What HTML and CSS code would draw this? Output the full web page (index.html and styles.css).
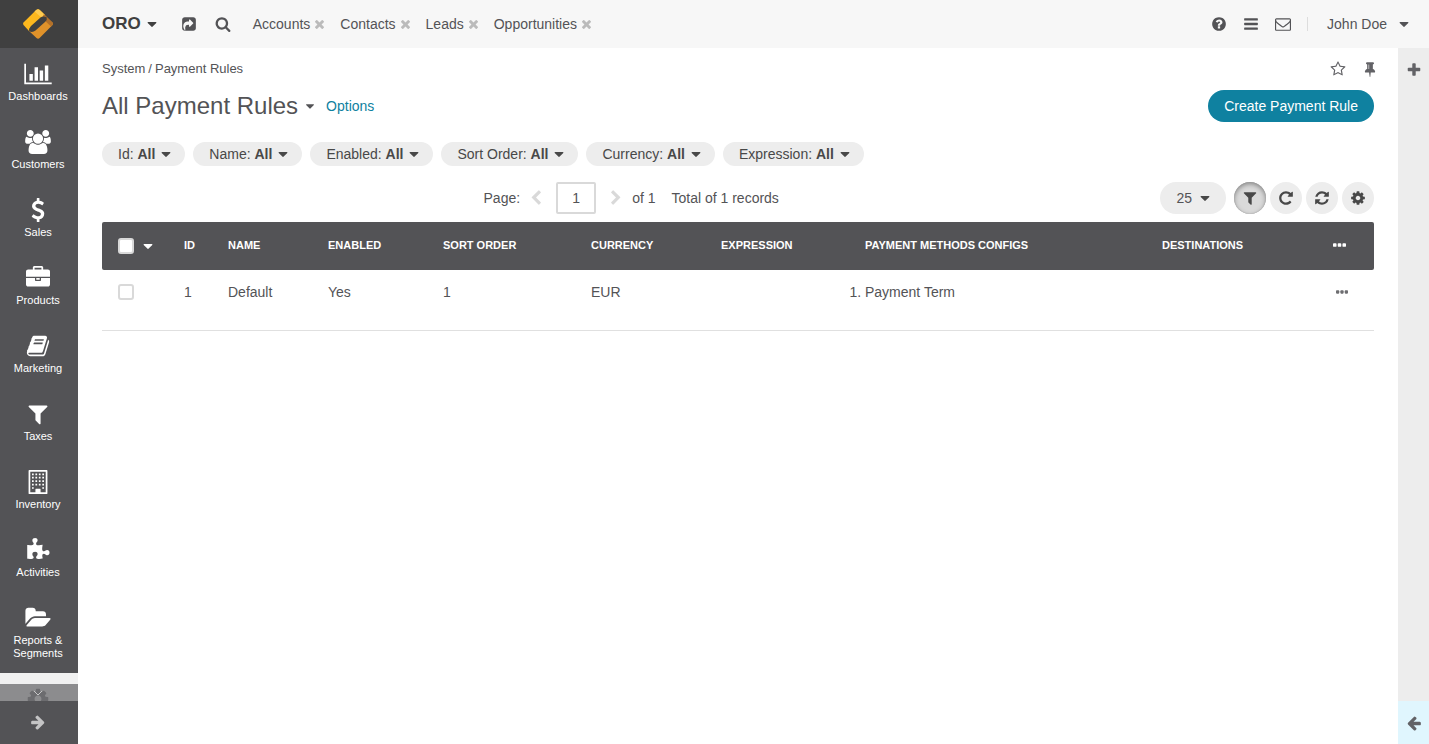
FILE: index.html
```
<!DOCTYPE html>
<html lang="en">
<head>
<meta charset="utf-8">
<title>All Payment Rules</title>
<link rel="stylesheet" href="styles.css">
</head>
<body>
<svg class="sprite" aria-hidden="true">
  <symbol id="caret" viewBox="384 640 1024 576"><path d="M1408 704q0 26-19 45l-448 448q-19 19-45 19t-45-19l-448-448q-19-19-19-45t19-45 45-19h896q26 0 45 19t19 45z"/></symbol>
  <symbol id="share" viewBox="0 0 1792 1792"><path d="M1005 1197l352-352q19-19 19-45t-19-45l-352-352q-30-31-69-14-40 17-40 59v160q-119 0-216 19.5t-162.5 51-114 79-76.5 95.5-44.5 109-21.5 111.5-5 110.5q0 181 167 404 11 12 25 12 7 0 13-3 22-9 19-33-44-354 62-473 46-52 130-75.5t224-23.5v160q0 42 40 59 12 5 24 5 26 0 45-19zm659-781v960q0 119-84.5 203.5t-203.5 84.5h-960q-119 0-203.5-84.5t-84.5-203.5v-960q0-119 84.5-203.5t203.5-84.5h960q119 0 203.5 84.5t84.5 203.5z"/></symbol>
  <symbol id="search" viewBox="0 0 1792 1792"><path d="M1216 832q0-185-131.5-316.5t-316.5-131.5-316.5 131.5-131.5 316.5 131.5 316.5 316.5 131.5 316.5-131.5 131.5-316.5zm512 832q0 52-38 90t-90 38q-54 0-90-38l-343-342q-179 124-399 124-143 0-273.5-55.5t-225-150-150-225-55.5-273.5 55.5-273.5 150-225 225-150 273.5-55.5 273.5 55.5 225 150 150 225 55.5 273.5q0 220-124 399l343 343q37 37 37 90z"/></symbol>
  <symbol id="chart" viewBox="0 0 2048 1792"><path d="M640 896v512h-256v-512h256zm384-512v1024h-256v-1024h256zm1024 1152v128h-2048v-1536h128v1408h1920zm-640-896v768h-256v-768h256zm384-384v1152h-256v-1152h256z"/></symbol>
  <symbol id="users" viewBox="0 0 1920 1792"><path d="M593 896q-162 5-265 128h-134q-82 0-138-40.5t-56-118.5q0-353 124-353 6 0 43.5 21t97.5 42.5 119 21.5q67 0 133-23-5 37-5 66 0 135 81 256zm1071 637q0 120-73 189.5t-194 69.5h-874q-121 0-194-69.5t-73-189.5q0-53 3.5-103.5t14-109 26.5-108.5 43-97.5 62-81 85.5-53.5 111.5-20q10 0 43 21.5t73 48 107 48 135 21.5 135-21.5 107-48 73-48 43-21.5q61 0 111.5 20t85.5 53.5 62 81 43 97.5 26.5 108.5 14 109 3.5 103.5zm-1024-1277q0 106-75 181t-181 75-181-75-75-181 75-181 181-75 181 75 75 181zm704 384q0 159-112.5 271.5t-271.5 112.5-271.5-112.5-112.5-271.5 112.5-271.5 271.5-112.5 271.5 112.5 112.5 271.5zm576 225q0 78-56 118.5t-138 40.5h-134q-103-123-265-128 81-121 81-256 0-29-5-66 66 23 133 23 59 0 119-21.5t97.5-42.5 43.5-21q124 0 124 353zm-128-609q0 106-75 181t-181 75-181-75-75-181 75-181 181-75 181 75 75 181z"/></symbol>
  <symbol id="dollar" viewBox="0 0 1792 1792"><path d="M1362 1185q0 153-99.5 263.5t-258.5 136.5v175q0 14-9 23t-23 9h-135q-13 0-22.5-9.5t-9.5-22.5v-175q-66-9-127.5-31t-101.5-44.5-74-48-46.5-37.5-17.5-18q-17-21-2-41l103-135q7-10 23-12 15-2 24 9l2 2q113 99 243 125 37 8 74 8 81 0 142.5-43t61.5-122q0-28-15-53t-33.5-42-58.5-37.5-66-32-80-32.5q-39-16-61.5-25t-61.5-26.5-62.5-31-56.5-35.5-53.5-42.5-43.5-49-35.5-58-21-66.5-8.5-78q0-138 98-242t255-134v-180q0-13 9.5-22.5t22.5-9.5h135q14 0 23 9t9 23v176q57 6 110.5 23t87 33.5 63.5 37.5 39 29 15 14q17 18 5 38l-81 146q-8 15-23 16-14 3-27-7-3-3-14.5-12t-39-26.5-58.5-32-74.5-26-85.5-11.5q-95 0-155 43t-60 111q0 26 8.5 48t29.5 41.5 39.5 33 56 31 60.5 27 70 27.5q53 20 81 31.5t76 35 75.5 42.5 62 50 53 63.5 31.5 76.5 13 94z"/></symbol>
  <symbol id="briefcase" viewBox="0 0 1792 1792"><path d="M640 256h512v-128h-512v128zm1152 640v480q0 66-47 113t-113 47h-1472q-66 0-113-47t-47-113v-480h672v160q0 26 19 45t45 19h320q26 0 45-19t19-45v-160h672zm-768 0v128h-256v-128h256zm768-480v384h-1792v-384q0-66 47-113t113-47h352v-160q0-40 28-68t68-28h576q40 0 68 28t28 68v160h352q66 0 113 47t47 113z"/></symbol>
  <symbol id="book" viewBox="0 0 1792 1792"><path d="M1703 478q40 57 18 129l-275 906q-19 64-76.5 107.5t-122.5 43.5h-923q-77 0-148.5-53.5t-99.5-131.5q-24-67-2-127 0-4 3-27t4-37q1-8-3-21.5t-3-19.5q2-11 8-21t16.5-23.5 16.5-23.5q23-38 45-91.5t30-91.5q3-10 .5-30t-.5-28q3-11 17-28t17-23q21-36 42-92t25-90q1-9-2.5-32t.5-28q4-13 22-30.5t22-22.5q19-26 42.5-84.5t27.5-96.5q1-8-3-25.5t-2-26.5q2-8 9-18t18-23 17-21q8-12 16.5-30.5t15-35 16-36 19.5-32 26.5-23.5 36-11.5 47.5 5.5l-1 3q38-9 51-9h761q74 0 114 56t18 130l-274 906q-36 119-71.5 153.5t-128.5 34.5h-869q-27 0-38 15-11 16-1 43 24 70 144 70h923q29 0 56-15.5t35-41.5l300-987q7-22 5-57 38 15 59 43zm-1064 2q-4 13 2 22.5t20 9.5h608q13 0 25.5-9.5t16.5-22.5l21-64q4-13-2-22.5t-20-9.5h-608q-13 0-25.5 9.5t-16.5 22.5zm-83 256q-4 13 2 22.5t20 9.5h608q13 0 25.5-9.5t16.5-22.5l21-64q4-13-2-22.5t-20-9.5h-608q-13 0-25.5 9.5t-16.5 22.5z"/></symbol>
  <symbol id="filter" viewBox="0 0 1792 1792"><path d="M1595 295q17 41-14 70l-493 493v742q0 42-39 59-13 5-25 5-27 0-45-19l-256-256q-19-19-19-45v-486l-493-493q-31-29-14-70 17-39 59-39h1280q42 0 59 39z"/></symbol>
  <symbol id="building" viewBox="0 0 1792 1792"><path fill-rule="evenodd" d="M256 0h1280q64 0 64 64v1664q0 64-64 64h-1280q-64 0-64-64v-1664q0-64 64-64zm64 128v1536h384v-224q0-32 32-32h320q32 0 32 32v224h384v-1536z"/><path d="M448 256h128v128h-128zM704 256h128v128h-128zM960 256h128v128h-128zM1216 256h128v128h-128zM448 512h128v128h-128zM704 512h128v128h-128zM960 512h128v128h-128zM1216 512h128v128h-128zM448 768h128v128h-128zM704 768h128v128h-128zM960 768h128v128h-128zM1216 768h128v128h-128zM448 1024h128v128h-128zM704 1024h128v128h-128zM960 1024h128v128h-128zM1216 1024h128v128h-128zM448 1280h128v128h-128zM1216 1280h128v128h-128z"/></symbol>
  <symbol id="puzzle" viewBox="0 0 1792 1792"><path d="M1755 1098q0 81-44.5 135t-123.5 54q-41 0-77.5-17.5t-59-38-56.5-38-71-17.5q-110 0-110 124 0 39 16 115t15 115v5q-22 0-33 1-34 3-97.5 11.5t-115.5 13.5-98 5q-61 0-103-26.5t-42-83.5q0-37 17.5-71t38-56.5 38-59 17.5-77.5q0-79-54-123.5t-135-44.5q-84 0-143 45.5t-59 127.5q0 43 15 83t33.5 64.5 33.5 53 15 50.5q0 45-46 89-37 35-117 35-95 0-245-24-9-2-27.5-4t-27.5-4l-13-2q-1 0-3-1-2 0-2-1v-1024q2 1 17.5 3.5t34 5 21.5 3.5q150 24 245 24 80 0 117-35 46-44 46-89 0-22-15-50.5t-33.5-53-33.5-64.5-15-83q0-82 59-127.5t144-45.5q80 0 134 44.5t54 123.5q0 41-17.5 77.5t-38 59-38 56.5-17.5 71q0 57 42 83.5t103 26.5q64 0 180-15t163-17v2q-1 2-3.5 17.5t-5 34-3.5 21.5q-24 150-24 245 0 80 35 117 44 46 89 46 22 0 50.5-15t53-33.5 64.5-33.5 83-15q82 0 127.5 59t45.5 143z"/></symbol>
  <symbol id="folder" viewBox="0 0 1879 1792"><path d="M1879 952q0 31-31 66l-336 396q-43 51-120.5 86.5t-143.5 35.5h-1088q-34 0-60.5-13t-26.5-43q0-31 31-66l336-396q43-51 120.5-86.5t143.5-35.5h1088q34 0 60.5 13t26.5 43zm-343-344v160h-832q-94 0-197 47.5t-164 119.5l-337 396-5 6q0-4-.5-12.5t-.5-12.5v-960q0-92 66-158t158-66h320q92 0 158 66t66 158v32h544q92 0 158 66t66 158z"/></symbol>
  <symbol id="cog" viewBox="0 0 1792 1792"><path d="M1152 896q0-106-75-181t-181-75-181 75-75 181 75 181 181 75 181-75 75-181zm512-109v222q0 12-8 23t-20 13l-185 28q-19 54-39 91 35 50 107 138 10 12 10 25t-9 23q-27 37-99 108t-94 71q-12 0-26-9l-138-108q-44 23-91 38-16 136-29 186-7 28-36 28h-222q-14 0-24.5-8.5t-11.5-21.5l-28-184q-49-16-90-37l-141 107q-10 9-25 9-14 0-25-11-126-114-165-168-7-10-7-23 0-12 8-23 15-21 51-66.5t54-70.5q-27-50-41-99l-183-27q-13-2-21-12.5t-8-23.5v-222q0-12 8-23t19-13l186-28q14-46 39-92-40-57-107-138-10-12-10-24 0-10 9-23 26-36 98.5-107.5t94.5-71.5q13 0 26 10l138 107q44-23 91-38 16-136 29-186 7-28 36-28h222q14 0 24.5 8.5t11.5 21.5l28 184q49 16 90 37l142-107q9-9 24-9 13 0 25 10 129 119 165 170 7 8 7 22 0 12-8 23-15 21-51 66.5t-54 70.5q26 50 41 98l183 28q13 2 21 12.5t8 23.5z"/></symbol>
  <symbol id="refresh" viewBox="0 0 1792 1792"><path d="M1639 1056q0 5-1 7-64 268-268 434.5t-478 166.5q-146 0-282.5-55t-243.5-157l-129 129q-19 19-45 19t-45-19-19-45v-448q0-26 19-45t45-19h448q26 0 45 19t19 45-19 45l-137 137q71 66 161 102t187 36q134 0 250-65t186-179q11-17 53-117 8-23 30-23h192q13 0 22.5 9.5t9.5 22.5zm25-800v448q0 26-19 45t-45 19h-448q-26 0-45-19t-19-45 19-45l138-138q-148-137-349-137-134 0-250 65t-186 179q-11 17-53 117-8 23-30 23h-199q-13 0-22.5-9.5t-9.5-22.5v-7q65-268 270-434.5t480-166.5q146 0 284 55.5t245 156.5l130-129q19-19 45-19t45 19 19 45z"/></symbol>
  <symbol id="repeat" viewBox="0 0 1792 1792"><path d="M1664 256v448q0 26-19 45t-45 19h-448q-42 0-59-40-17-39 14-69l138-138q-148-137-349-137-104 0-198.5 40.5t-163.5 109.5-109.5 163.5-40.5 198.5 40.5 198.5 109.5 163.5 163.5 109.5 198.5 40.5q119 0 225-52t179-147q7-10 23-12 15 0 25 9l137 138q9 8 9.5 20.5t-7.5 22.5q-109 132-264 204.5t-327 72.5q-156 0-298-61t-245-164-164-245-61-298 61-298 164-245 245-164 298-61q147 0 284.5 55.5t244.5 156.5l130-129q29-31 70-14 39 17 39 59z"/></symbol>
  <symbol id="question" viewBox="0 0 1792 1792"><path d="M1024 1376v-192q0-14-9-23t-23-9h-192q-14 0-23 9t-9 23v192q0 14 9 23t23 9h192q14 0 23-9t9-23zm256-672q0-88-55.5-163t-138.5-116-170-41q-243 0-371 213-15 24 8 42l132 100q7 6 19 6 16 0 25-12 53-68 86-92 34-24 86-24 48 0 85.5 26t37.5 59q0 38-20 61t-68 45q-63 28-115.5 86.5t-52.5 125.5v36q0 14 9 23t23 9h192q14 0 23-9t9-23q0-19 21.5-49.5t54.5-49.5q32-18 49-28.5t46-35 44.5-48 28-60.5 12.5-81zm384 192q0 209-103 385.5t-279.5 279.5-385.5 103-385.5-103-279.5-279.5-103-385.5 103-385.5 279.5-279.5 385.5-103 385.5 103 279.5 279.5 103 385.5z"/></symbol>
  <symbol id="bars" viewBox="0 0 1792 1792"><rect x="128" y="256" width="1536" height="256" rx="64"/><rect x="128" y="768" width="1536" height="256" rx="64"/><rect x="128" y="1280" width="1536" height="256" rx="64"/></symbol>
  <symbol id="mail" viewBox="0 0 1792 1792"><path d="M1664 1504v-768q-32 36-69 66-268 206-426 338-51 43-83 67t-86.5 48.5-102.5 24.5h-2q-48 0-102.5-24.5t-86.5-48.5-83-67q-158-132-426-338-37-30-69-66v768q0 13 9.5 22.5t22.5 9.5h1472q13 0 22.5-9.5t9.5-22.5zm0-1051v-24.5l-.5-13-3-12.5-5.5-9-9-7.5-14-2.5h-1472q-13 0-22.5 9.5t-9.5 22.5q0 168 147 284 193 152 401 317 6 5 35 29.5t46 37.5 44.5 31.5 50.5 27.5 43 9h2q20 0 43-9t50.5-27.5 44.5-31.5 46-37.5 35-29.5q208-165 401-317 54-43 100.5-115.5t46.5-131.5zm128-37v1088q0 66-47 113t-113 47h-1472q-66 0-113-47t-47-113v-1088q0-66 47-113t113-47h1472q66 0 113 47t47 113z"/></symbol>
  <symbol id="star" viewBox="0 0 1792 1792"><path d="M1201 1004l306-297-422-62-189-382-189 382-422 62 306 297-73 421 378-199 377 199zm527-357q0 22-26 48l-363 354 86 500q1 7 1 20 0 50-41 50-19 0-40-12l-449-236-449 236q-22 12-40 12-21 0-31.5-14.5t-10.5-35.5q0-6 2-20l86-500-364-354q-25-27-25-48 0-37 56-46l502-73 225-455q19-41 49-41t49 41l225 455 502 73q56 9 56 46z"/></symbol>
  <symbol id="pin" viewBox="0 0 1792 1792"><path d="M800 864v-448q0-14-9-23t-23-9-23 9-9 23v448q0 14 9 23t23 9 23-9 9-23zm672 352q0 26-19 45t-45 19h-429l-51 483q-2 12-10.5 20.5t-20.5 8.5h-1q-27 0-32-27l-76-485h-404q-26 0-45-19t-19-45q0-123 78.5-221.5t177.5-98.5v-512q-52 0-90-38t-38-90 38-90 90-38h640q52 0 90 38t38 90-38 90-90 38v512q99 0 177.5 98.5t78.5 221.5z"/></symbol>
  <symbol id="plus" viewBox="0 0 1792 1792"><path d="M1600 736v192q0 40-28 68t-68 28h-416v416q0 40-28 68t-68 28h-192q-40 0-68-28t-28-68v-416h-416q-40 0-68-28t-28-68v-192q0-40 28-68t68-28h416v-416q0-40 28-68t68-28h192q40 0 68 28t28 68v416h416q40 0 68 28t28 68z"/></symbol>
  <symbol id="times" viewBox="302 238 1188 1188"><path d="M1490 1322q0 40-28 68l-136 136q-28 28-68 28t-68-28l-294-294-294 294q-28 28-68 28t-68-28l-136-136q-28-28-28-68t28-68l294-294-294-294q-28-28-28-68t28-68l136-136q28-28 68-28t68 28l294 294 294-294q28-28 68-28t68 28l136 136q28 28 28 68t-28 68l-294 294 294 294q28 28 28 68z" transform="translate(0 -128)"/></symbol>
  <symbol id="arrow" viewBox="0 0 1792 1792"><path d="M1664 896v128q0 53-32.5 90.5t-84.5 37.5h-704l293 294q38 36 38 90t-38 90l-75 76q-37 37-90 37-52 0-91-37l-651-652q-37-37-37-90 0-52 37-91l651-650q38-38 91-38 52 0 90 38l75 74q38 38 38 91t-38 91l-293 293h704q52 0 84.5 37.5t32.5 90.5z"/></symbol>
  <symbol id="chevron" viewBox="0 0 1792 1792"><path d="M1427 301l-531 531 531 531q19 19 19 45t-19 45l-166 166q-19 19-45 19t-45-19l-742-742q-19-19-19-45t19-45l742-742q19-19 45-19t45 19l166 166q19 19 19 45t-19 45z"/></symbol>
  <symbol id="dots" viewBox="0 0 1408 384"><rect width="384" height="384" rx="96"/><rect x="512" width="384" height="384" rx="96"/><rect x="1024" width="384" height="384" rx="96"/></symbol>
</svg>

<div class="app">
  <aside class="sidebar">
    <a class="logo" href="#" aria-label="Home">
      <svg viewBox="0 0 32 32" width="32" height="32">
        <path fill="#fdb81e" d="M1.500 17Q.5 15.700 1.500 14.400L14.200 1.900Q16 .5 17.800 1.900L23 7 7 23Z"/>
        <path fill="#ffcb4f" d="M12.500 3.600L14.200 1.900Q16 .5 17.800 1.900L23 7 20 10Z"/>
        <path fill="#e0922a" d="M7 23L23 8 30.500 14.400Q31.500 15.700 30.500 17L17.600 30Q16.100 31.500 14.500 30Z"/>
        <path fill="#b3712a" d="M22 6L30.500 14.400Q31.500 15.700 30.500 17L29 18.500 20 10Z"/>
        <path fill="#404040" d="M7.300 23.300Q6.500 20.500 9 18L18.500 9.500Q21 7.500 24.700 9.200 25.500 11.500 23 14L13.500 22.500Q10.500 25 7.300 23.300Z"/>
      </svg>
    </a>
    <nav class="menu">
      <a class="menu-item" href="#"><svg class="menu-icon"><use href="#chart"/></svg><span>Dashboards</span></a>
      <a class="menu-item" href="#"><svg class="menu-icon"><use href="#users"/></svg><span>Customers</span></a>
      <a class="menu-item" href="#"><svg class="menu-icon"><use href="#dollar"/></svg><span>Sales</span></a>
      <a class="menu-item" href="#"><svg class="menu-icon"><use href="#briefcase"/></svg><span>Products</span></a>
      <a class="menu-item" href="#"><svg class="menu-icon"><use href="#book"/></svg><span>Marketing</span></a>
      <a class="menu-item" href="#"><svg class="menu-icon"><use href="#filter"/></svg><span>Taxes</span></a>
      <a class="menu-item" href="#"><svg class="menu-icon"><use href="#building"/></svg><span>Inventory</span></a>
      <a class="menu-item" href="#"><svg class="menu-icon"><use href="#puzzle"/></svg><span>Activities</span></a>
      <a class="menu-item" href="#"><svg class="menu-icon"><use href="#folder"/></svg><span>Reports &amp; Segments</span></a>
      <a class="menu-item active" href="#" aria-label="System"><svg class="menu-icon"><use href="#cog"/></svg></a>
      <button class="menu-scroll" aria-label="Scroll down"><svg viewBox="0 0 10 6" width="10" height="6"><path d="M1 1L5 5L9 1" fill="none" stroke="#c8c8c8" stroke-width="1"/></svg></button>
    </nav>
    <button class="menu-toggle" aria-label="Expand menu"><svg class="icon flip"><use href="#arrow"/></svg></button>
  </aside>

  <div class="page">
    <header class="topbar">
      <button class="brand">ORO <svg class="caret"><use href="#caret"/></svg></button>
      <button class="plain" aria-label="Shortcuts"><svg class="icon"><use href="#share"/></svg></button>
      <button class="plain search" aria-label="Search"><svg class="icon"><use href="#search"/></svg></button>
      <nav class="tabs">
        <span class="tab"><a href="#">Accounts</a><button class="close" aria-label="Close Accounts"><svg><use href="#times"/></svg></button></span>
        <span class="tab"><a href="#">Contacts</a><button class="close" aria-label="Close Contacts"><svg><use href="#times"/></svg></button></span>
        <span class="tab"><a href="#">Leads</a><button class="close" aria-label="Close Leads"><svg><use href="#times"/></svg></button></span>
        <span class="tab"><a href="#">Opportunities</a><button class="close" aria-label="Close Opportunities"><svg><use href="#times"/></svg></button></span>
      </nav>
      <div class="tools">
        <button class="plain" aria-label="Help"><svg class="icon"><use href="#question"/></svg></button>
        <button class="plain" aria-label="Menu"><svg class="icon"><use href="#bars"/></svg></button>
        <button class="plain" aria-label="Messages"><svg class="icon"><use href="#mail"/></svg></button>
      </div>
      <button class="user">John Doe <svg class="caret"><use href="#caret"/></svg></button>
    </header>

    <div class="body">
      <main class="content">
        <div class="crumb-row">
          <nav class="crumbs"><a href="#">System</a><span>/</span><span>Payment Rules</span></nav>
          <div class="marks">
            <button class="plain" aria-label="Favorite"><svg class="icon"><use href="#star"/></svg></button>
            <button class="plain" aria-label="Pin"><svg class="icon"><use href="#pin"/></svg></button>
          </div>
        </div>
        <div class="title-row">
          <h1>All Payment Rules</h1>
          <button class="plain" aria-label="Choose view"><svg class="caret small"><use href="#caret"/></svg></button>
          <a class="options" href="#">Options</a>
          <a class="create" href="#">Create Payment Rule</a>
        </div>
        <div class="filters">
          <button class="pill"><span>Id: <b>All</b></span><svg class="caret"><use href="#caret"/></svg></button>
          <button class="pill"><span>Name: <b>All</b></span><svg class="caret"><use href="#caret"/></svg></button>
          <button class="pill"><span>Enabled: <b>All</b></span><svg class="caret"><use href="#caret"/></svg></button>
          <button class="pill"><span>Sort Order: <b>All</b></span><svg class="caret"><use href="#caret"/></svg></button>
          <button class="pill"><span>Currency: <b>All</b></span><svg class="caret"><use href="#caret"/></svg></button>
          <button class="pill"><span>Expression: <b>All</b></span><svg class="caret"><use href="#caret"/></svg></button>
        </div>
        <div class="toolbar">
          <div class="pager">
            <label for="page">Page:</label>
            <button class="step" aria-label="Previous page"><svg class="icon"><use href="#chevron"/></svg></button>
            <input class="page-input" id="page" type="text" value="1">
            <button class="step next" aria-label="Next page"><svg class="icon flip"><use href="#chevron"/></svg></button>
            <span>of 1</span>
            <span class="total">Total of 1 records</span>
          </div>
          <button class="size">25 <svg class="caret"><use href="#caret"/></svg></button>
          <div class="actions">
            <button class="round pressed" aria-label="Filters"><svg class="icon"><use href="#filter"/></svg></button>
            <button class="round" aria-label="Refresh"><svg class="icon"><use href="#repeat"/></svg></button>
            <button class="round" aria-label="Reset"><svg class="icon"><use href="#refresh"/></svg></button>
            <button class="round" aria-label="Settings"><svg class="icon"><use href="#cog"/></svg></button>
          </div>
        </div>
        <table class="grid">
          <colgroup><col class="w-check"><col class="w-id"><col class="w-name"><col class="w-enabled"><col class="w-sort"><col class="w-currency"><col class="w-expression"><col><col class="w-dest"><col class="w-action"></colgroup>
          <thead>
            <tr>
              <th><span class="select-all"><input class="check" type="checkbox" aria-label="Select all"><button class="plain" aria-label="Selection options"><svg class="caret light"><use href="#caret"/></svg></button></span></th>
              <th>ID</th><th>NAME</th><th>ENABLED</th><th>SORT ORDER</th><th>CURRENCY</th><th>EXPRESSION</th><th>PAYMENT METHODS CONFIGS</th><th>DESTINATIONS</th>
              <th><button class="plain light" aria-label="Columns"><svg class="dots head"><use href="#dots"/></svg></button></th>
            </tr>
          </thead>
          <tbody>
            <tr>
              <td><input class="check" type="checkbox" aria-label="Select row 1"></td>
              <td>1</td><td>Default</td><td>Yes</td><td>1</td><td>EUR</td><td></td>
              <td><ol class="methods"><li>Payment Term</li></ol></td><td></td>
              <td><button class="plain row-actions" aria-label="Row actions"><svg class="dots"><use href="#dots"/></svg></button></td>
            </tr>
          </tbody>
        </table>
      </main>
      <aside class="rail">
        <button class="rail-add" aria-label="Add widget"><svg class="icon"><use href="#plus"/></svg></button>
        <button class="rail-toggle" aria-label="Expand sidebar"><svg class="icon"><use href="#arrow"/></svg></button>
      </aside>
    </div>
  </div>
</div>
</body>
</html>
```
FILE: styles.css
```
* { box-sizing: border-box; }
body { margin: 0; background: #fff; color: #535356; font: 14px/18px "Liberation Sans", Arial, sans-serif; }
a { color: inherit; text-decoration: none; }
button { margin: 0; padding: 0; border: 0; background: none; color: inherit; font: inherit; }
svg { display: block; flex: none; fill: currentColor; }
.sprite { position: absolute; width: 0; height: 0; }
.app { display: flex; height: 100vh; }
.icon { width: 16px; height: 16px; }
.flip { transform: scaleX(-1); }
.caret { width: 10px; height: 5px; }
.caret.small { width: 8px; height: 5px; }
.caret.light, .light { color: #fff; }
.plain { display: flex; align-items: center; }

.sidebar { display: flex; flex-direction: column; flex: none; width: 78px; background: #535356; color: #fff; }
.logo { display: flex; flex: none; align-items: center; justify-content: center; height: 48px; padding-right: 2px; background: #404040; }
.menu { position: relative; flex: 1; min-height: 0; overflow: hidden; font-size: 11px; line-height: 13px; text-align: center; }
.menu-item { display: flex; flex-direction: column; align-items: center; gap: 4px; padding: 14px 10px 13px 8px; }
.menu-icon { width: 28px; height: 24px; }
.menu-item.active { height: 68px; background: #f1f1f1; color: #535356; }
.menu-scroll { position: absolute; right: 0; bottom: 0; left: 0; display: flex; align-items: center; justify-content: center; height: 17px; padding-right: 2px; background: rgba(115, 115, 118, .8); }
.menu-toggle { display: flex; flex: none; align-items: center; justify-content: center; height: 43px; padding: 0 2px 2px 0; color: #c4c4c5; }

.page { display: flex; flex: 1; flex-direction: column; min-width: 0; }
.topbar { display: flex; flex: none; align-items: center; height: 48px; padding: 0 20px 0 24px; background: #f7f7f7; }
.brand { display: flex; align-items: center; gap: 6px; margin-right: 24px; color: #404040; font-size: 17px; font-weight: bold; }
.search { margin-left: 18px; }
.tabs { display: flex; gap: 16px; margin-left: 22px; }
.tab { display: flex; align-items: center; gap: 5px; }
.close { color: #bbb; }
.close svg { width: 9px; height: 9px; }
.tools { display: flex; gap: 16px; margin-left: auto; }
.user { display: flex; align-items: center; gap: 12px; margin-left: 16px; }
.user::before { width: 1px; height: 14px; margin-right: 7px; background: #ddd; content: ""; }

.body { display: flex; flex: 1; min-height: 0; }
.content { flex: 1; min-width: 0; padding: 12px 24px; }
.crumb-row { display: flex; align-items: center; justify-content: space-between; height: 18px; font-size: 13px; }
.crumbs { display: flex; gap: 3px; }
.marks { display: flex; gap: 16px; margin-right: -4px; color: #626266; }
.title-row { display: flex; align-items: center; height: 32px; margin-top: 12px; }
h1 { margin: 0 8px 0 0; font-size: 24px; font-weight: normal; line-height: 32px; }
.options { margin-left: 12px; color: #0f81a0; }
.create { margin-left: auto; padding: 7px 16px; border-radius: 16px; background: #0f81a0; color: #fff; }
.filters { display: flex; flex-wrap: wrap; gap: 8px; margin-top: 20px; }
.pill { display: flex; align-items: center; gap: 6px; height: 24px; padding: 0 14px 0 16px; border-radius: 12px; background: #ededed; color: #484848; }
.toolbar { display: flex; align-items: center; margin: 16px 0 8px; }
.pager { display: flex; flex: 1; align-items: center; justify-content: center; }
.step { padding: 0 12px 0 8px; color: #d9d9d9; }
.step.next { padding: 0 8px 0 12px; }
.step + span { margin-right: 16px; }
.page-input { width: 40px; height: 32px; padding: 0; border: 2px solid #d9d9d9; border-radius: 2px; background: #fff; color: inherit; font: inherit; text-align: center; }
.size { display: flex; align-items: center; gap: 8px; height: 32px; margin-right: 8px; padding: 0 16px; border-radius: 16px; background: #ededed; }
.size .caret, .round { color: #484848; }
.actions { display: flex; gap: 4px; }
.round { display: flex; align-items: center; justify-content: center; width: 32px; height: 32px; border-radius: 50%; background: #ededed; }
.pressed { background: #dadada; box-shadow: inset 0 2px 5px #888, inset 0 0 1px #888; }

.grid { width: 100%; border-collapse: separate; border-spacing: 0; table-layout: fixed; }
.grid th { height: 48px; padding: 0 0 2px 16px; background: #535356; color: #fff; font-size: 11px; line-height: 16px; text-align: left; white-space: nowrap; }
.grid th:first-child { padding: 0 0 0 16px; border-radius: 2px 0 0 2px; }
.grid th:last-child { border-radius: 0 2px 2px 0; }
.grid td { height: 61px; padding: 13px 0 0 16px; border-bottom: 1px solid #e0e0e0; vertical-align: top; }
.w-check { width: 66px; }
.w-id { width: 44px; }
.w-name { width: 100px; }
.w-enabled { width: 115px; }
.w-sort { width: 148px; }
.w-currency { width: 130px; }
.w-expression { width: 144px; }
.w-dest { width: 171px; }
.w-action { width: 57px; }
.select-all { display: flex; align-items: center; gap: 9px; }
.check { display: block; width: 16px; height: 16px; margin: 0; border: 2px solid #d9d9d9; border-radius: 3px; background: #fff; appearance: none; }
td .check { margin-top: 1px; }
.methods { margin: 0; padding: 0; }
.dots { width: 12px; height: 4px; }
.dots.head { width: 13px; }
.row-actions { height: 18px; padding-left: 3px; color: #6d6d70; }

.rail { display: flex; flex: none; flex-direction: column; justify-content: space-between; width: 31px; background: #ededed; color: #626266; }
.rail button { display: flex; align-items: center; justify-content: center; height: 43px; }
.rail-toggle { background: #e0f6fe; }
```
